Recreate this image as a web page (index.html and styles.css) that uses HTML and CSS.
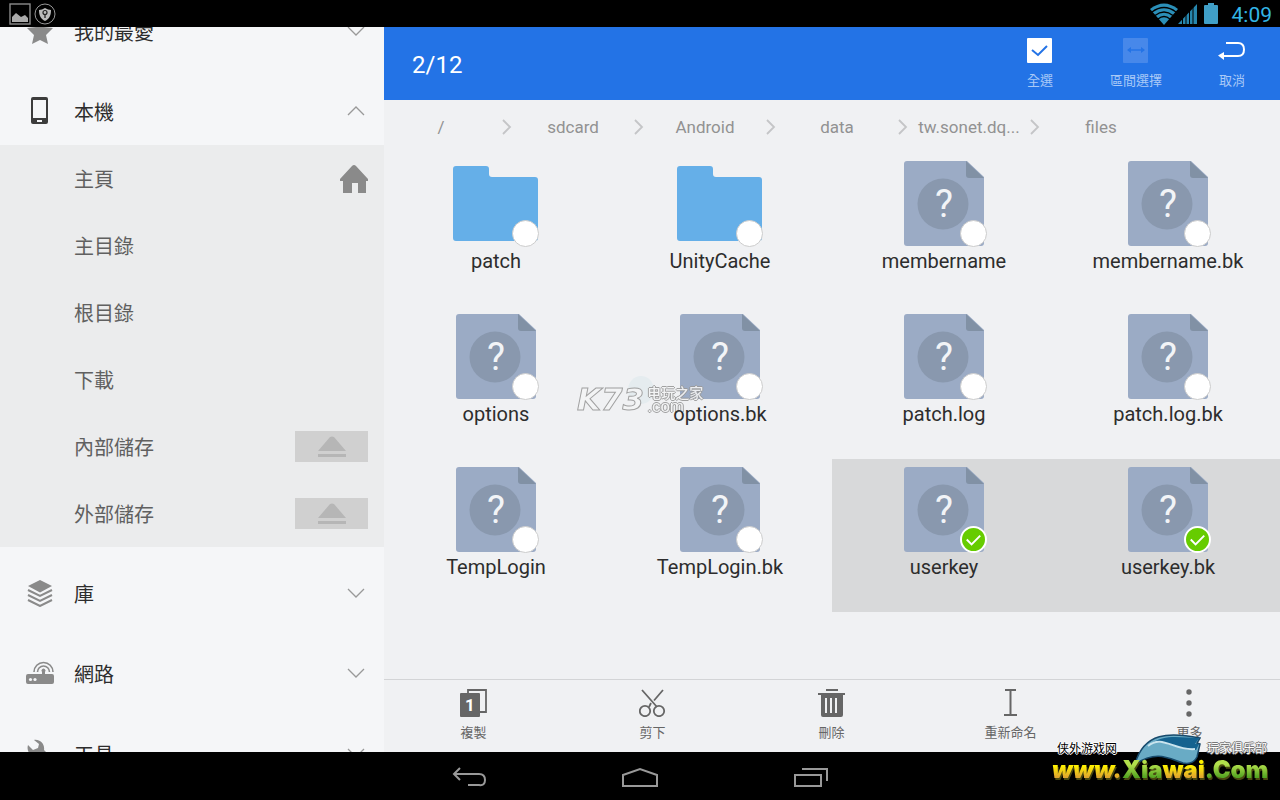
FILE: index.html
```html
<!DOCTYPE html>
<html lang="zh-Hant">
<head>
<meta charset="utf-8">
<title>檔案管理</title>
<link rel="stylesheet" href="styles.css">
</head>
<body>
<svg class="defs" aria-hidden="true">
  <symbol id="folder" viewBox="0 0 85 85"><path fill="#65afe8" d="M3 5h30q3 0 3 3v5q0 3 3 3h43q3 0 3 3v58q0 3-3 3H3q-3 0-3-3V8q0-3 3-3z"/></symbol>
  <symbol id="file" viewBox="0 0 85 85"><path fill="#9babc5" d="M6 0h60l17 16v66q0 3-3 3H6q-3 0-3-3V3q0-3 3-3z"/><path fill="#8191a5" d="M65 0l18 17H68q-3 0-3-3z"/><circle cx="42" cy="43" r="25.500" fill="#8998ae"/><text x="43" y="56" text-anchor="middle" class="mark">?</text></symbol>
  <symbol id="down" viewBox="0 0 18 10"><path d="M1 1l8 8 8-8" fill="none" stroke="#999" stroke-width="1.3"/></symbol>
  <symbol id="up" viewBox="0 0 18 10"><path d="M1 9l8-8 8 8" fill="none" stroke="#999" stroke-width="1.3"/></symbol>
  <symbol id="sep" viewBox="0 0 10 16"><path d="M1 1l7 7-7 7" fill="none" stroke="#c4c5c7" stroke-width="1.8"/></symbol>
  <symbol id="eject" viewBox="0 0 28 22"><path fill="#b6b6b6" d="M0 15L12 1q2-1 4 0l12 14zM0 18h28v3H0z"/></symbol>
</svg>

<header class="status">
  <div class="status-group">
    <svg width="22" height="22" viewBox="0 0 22 22"><rect x="1" y="1" width="20" height="20" fill="none" stroke="#8a8a8a" stroke-width="1.4"/><path fill="#aaa" d="M3 19v-5l4-4 5 4 4-2 3 3v4z"/></svg>
    <svg width="22" height="22" viewBox="0 0 22 22"><circle cx="11" cy="11" r="10" fill="none" stroke="#999"/><path fill="#bbb" d="M5 7q3 0 6-2 3 2 6 2c0 6-2 9-6 11-4-2-6-5-6-11z"/><circle cx="11" cy="9.500" r="2" fill="none" stroke="#222" stroke-width="1.200"/><path stroke="#222" stroke-width="1.300" d="M11 11v4"/></svg>
  </div>
  <div class="status-group">
    <svg width="28" height="22" viewBox="0 0 28 22"><path fill="#2b8fb8" d="M0 6Q14-5 28 6L14 22z"/><g fill="none" stroke="#000" stroke-width="1.300"><path d="M2 9q12-9 24 0M5 12.500q9-7 18 0M8 16q6-5 12 0"/></g></svg>
    <svg width="19" height="22" viewBox="0 0 19 22"><path fill="#2787ae" d="M0 21L19 1v20z"/><path stroke="#000" stroke-width="1" d="M4.500 0v22M8 0v22M11.500 0v22M15 0v22"/></svg>
    <svg class="battery" width="14" height="22" viewBox="0 0 14 22"><path fill="#409fc7" d="M4 0h6v2h3q1 0 1 1v17q0 1-1 1H1q-1 0-1-1V3q0-1 1-1h3z"/></svg>
    <time class="clock">4:09</time>
  </div>
</header>

<div class="app">
  <aside class="sidebar">
    <nav class="menu">
      <button class="group"><svg width="28" height="28" viewBox="0 0 28 28"><path fill="#8a8a8a" d="M14 1l4 9 9 1-7 7 2 9-8-4-8 4 2-9-7-7 9-1z"/></svg><span>我的最愛</span><svg class="arrow"><use href="#down"/></svg></button>
      <button class="group"><svg width="28" height="28" viewBox="0 0 28 28"><path fill="#3c3c3c" fill-rule="evenodd" d="M7 0h13q2 0 2 2v23q0 2-2 2H7q-2 0-2-2V2q0-2 2-2zm0 3v18h13V3zm4 20v2h5v-2z"/></svg><span>本機</span><svg class="arrow"><use href="#up"/></svg></button>
      <div class="subs">
        <a class="sub" href="#home"><span>主頁</span><svg width="28" height="28" viewBox="0 0 28 28"><path fill="#8a8a8a" d="M14 0q1 0 2 1l12 13v2h-2v12h-8V18h-6v10H3V16H0v-2L12 1q1-1 2-1z"/></svg></a>
        <a class="sub" href="#main">主目錄</a>
        <a class="sub" href="#root">根目錄</a>
        <a class="sub" href="#download">下載</a>
        <div class="sub"><a href="#internal">內部儲存</a><button class="eject" aria-label="退出內部儲存"><svg width="28" height="22"><use href="#eject"/></svg></button></div>
        <div class="sub"><a href="#external">外部儲存</a><button class="eject" aria-label="退出外部儲存"><svg width="28" height="22"><use href="#eject"/></svg></button></div>
      </div>
      <button class="group"><svg width="28" height="28" viewBox="0 0 28 28"><path fill="#8a8a8a" d="M14 1l12 6-12 6.500L2 7z"/><path fill="none" stroke="#8a8a8a" stroke-width="2" d="M2 11l12 6 12-6M2 16l12 6 12-6M2 21l12 6 12-6"/></svg><span>庫</span><svg class="arrow"><use href="#down"/></svg></button>
      <button class="group"><svg width="28" height="28" viewBox="0 0 28 28"><path fill="#8a8a8a" d="M2 15h14v-2a2 2 0 1 1 3 0v2h7q2 0 2 2v6q0 2-2 2H2q-2 0-2-2v-6q0-2 2-2z"/><g fill="#f5f6f8"><circle cx="4.500" cy="20.500" r="1.600"/><circle cx="9" cy="20.500" r="1.600"/></g><path fill="none" stroke="#8a8a8a" stroke-width="1.600" d="M8 13a9.500 9.500 0 0 1 19 0M11.500 13a6 6 0 0 1 12 0"/></svg><span>網路</span><svg class="arrow"><use href="#down"/></svg></button>
      <button class="group"><svg width="28" height="28" viewBox="0 0 28 28"><path fill="#8a8a8a" d="M8 1c6-1 11 4 10 10l9 9c2 3-3 8-6 6l-9-9C5 18 0 13 2 6l5 5 5-2 1-4z"/></svg><span>工具</span><svg class="arrow"><use href="#down"/></svg></button>
    </nav>
  </aside>

  <main class="content">
    <div class="bar">
      <h1 class="count">2/12</h1>
      <div class="actions">
        <button class="action"><svg width="28" height="28" viewBox="0 0 28 28"><rect x="1" y="1" width="25" height="25" rx="1" fill="#fff"/><path d="M6 13l6 5 9-9" fill="none" stroke="#2373e6" stroke-width="2"/></svg><span>全選</span></button>
        <button class="action" disabled><svg width="28" height="28" viewBox="0 0 28 28"><rect x="1" y="1" width="25" height="25" rx="1" fill="#4788ea"/><path d="M8 13h11" stroke="#2373e6" stroke-width="1.500"/><path fill="#2373e6" d="M5 13l4-3v6zM23 13l-4-3v6z"/></svg><span>區間選擇</span></button>
        <button class="action"><svg width="28" height="28" viewBox="0 0 28 28"><path d="M8 6h12q6 0 6 6.500T20 19H5" fill="none" stroke="#fff" stroke-width="2"/><path fill="#fff" d="M0 18.500L6 15v8z"/></svg><span>取消</span></button>
      </div>
    </div>
    <nav class="crumbs">
      <div class="crumb"><a href="#c0">/</a><svg><use href="#sep"/></svg></div>
      <div class="crumb"><a href="#c1">sdcard</a><svg><use href="#sep"/></svg></div>
      <div class="crumb"><a href="#c2">Android</a><svg><use href="#sep"/></svg></div>
      <div class="crumb"><a href="#c3">data</a><svg><use href="#sep"/></svg></div>
      <div class="crumb"><a href="#c4">tw.sonet.dq...</a><svg><use href="#sep"/></svg></div>
      <div class="crumb"><a href="#c5">files</a></div>
    </nav>
    <section class="files">
      <label class="item"><span class="thumb"><svg><use href="#folder"/></svg><input type="checkbox"></span><span class="name">patch</span></label>
      <label class="item"><span class="thumb"><svg><use href="#folder"/></svg><input type="checkbox"></span><span class="name">UnityCache</span></label>
      <label class="item"><span class="thumb"><svg><use href="#file"/></svg><input type="checkbox"></span><span class="name">membername</span></label>
      <label class="item"><span class="thumb"><svg><use href="#file"/></svg><input type="checkbox"></span><span class="name">membername.bk</span></label>
      <label class="item"><span class="thumb"><svg><use href="#file"/></svg><input type="checkbox"></span><span class="name">options</span></label>
      <label class="item"><span class="thumb"><svg><use href="#file"/></svg><input type="checkbox"></span><span class="name">options.bk</span></label>
      <label class="item"><span class="thumb"><svg><use href="#file"/></svg><input type="checkbox"></span><span class="name">patch.log</span></label>
      <label class="item"><span class="thumb"><svg><use href="#file"/></svg><input type="checkbox"></span><span class="name">patch.log.bk</span></label>
      <label class="item"><span class="thumb"><svg><use href="#file"/></svg><input type="checkbox"></span><span class="name">TempLogin</span></label>
      <label class="item"><span class="thumb"><svg><use href="#file"/></svg><input type="checkbox"></span><span class="name">TempLogin.bk</span></label>
      <label class="item"><span class="thumb"><svg><use href="#file"/></svg><input type="checkbox" checked><svg class="tick" viewBox="0 0 28 28"><path d="M7 14l5 5 9-9"/></svg></span><span class="name">userkey</span></label>
      <label class="item"><span class="thumb"><svg><use href="#file"/></svg><input type="checkbox" checked><svg class="tick" viewBox="0 0 28 28"><path d="M7 14l5 5 9-9"/></svg></span><span class="name">userkey.bk</span></label>
      <div class="k73"><i class="bubble"></i><b class="k73-name">K73</b><span class="k73-side"><span>电玩之家</span><span class="k73-com">.com</span></span></div>
    </section>
    <div class="tools">
      <button class="tool"><svg width="28" height="28" viewBox="0 0 28 28"><path d="M8 4V1h18v22h-6" fill="none" stroke="#666" stroke-width="1.800"/><rect y="4" width="20" height="24" rx="1" fill="#666"/><text x="10" y="22" text-anchor="middle" class="one">1</text></svg><span>複製</span></button>
      <button class="tool"><svg width="28" height="28" viewBox="0 0 28 28"><g fill="none" stroke="#666" stroke-width="1.800"><path d="M3 1l15 17M24 1l-9 10.500M12 14l-2 4"/><circle cx="6" cy="22" r="5.200"/><circle cx="20" cy="22" r="5.200"/></g></svg><span>剪下</span></button>
      <button class="tool"><svg width="28" height="28" viewBox="0 0 28 28"><path fill="#666" fill-rule="evenodd" d="M8 0h12v2H8zM0 4h27v2h-2v20q0 2-2 2H5q-2 0-2-2V6H0zm7 5v15h2V9zm5 0v15h2V9zm5 0v15h2V9z"/></svg><span>刪除</span></button>
      <button class="tool"><svg width="28" height="28" viewBox="0 0 28 28"><path fill="#666" d="M8 0h11v2h-4.500v23H20v2H7v-2h5.500V2H8z"/></svg><span>重新命名</span></button>
      <button class="tool"><svg width="28" height="28" viewBox="0 0 28 28"><g fill="#666"><circle cx="13" cy="3" r="2.700"/><circle cx="13" cy="14" r="2.700"/><circle cx="13" cy="25" r="2.700"/></g></svg><span>更多</span></button>
    </div>
  </main>
</div>

<footer class="system">
  <button aria-label="返回"><svg width="34" height="20" viewBox="0 0 34 20"><path d="M8 1L2 7l6 6M3 7h24q6 0 6 6t-6 5H16"/></svg></button>
  <button aria-label="主畫面"><svg width="38" height="20" viewBox="0 0 38 20"><path d="M2 8l17-6 17 6v11H2z"/></svg></button>
  <button aria-label="最近"><svg width="36" height="20" viewBox="0 0 36 20"><path d="M2 8h26v11H2zM9 2h25v12"/></svg></button>
  <div class="brand">
    <svg class="wave" viewBox="0 0 68 32"><path fill="#69abc5" stroke="#174a6c" stroke-width="1.500" d="M1 30C10-2 35-2 66 4l-3 5 3 1-3 13q-4 8-14 6C34 24 23 16 1 30z"/><path fill="#14628f" d="M15 11C31-1 47 4 65 4l-4 6h4l-3 6C44 17 28 3 15 11z"/><path fill="none" stroke="#c9e4ee" stroke-width="2" d="M14 12C28 0 40 17 61 15"/></svg>
    <div class="brand-top"><span>侠外游戏网</span><span class="club">玩家俱乐部</span></div>
    <div class="brand-url"><span class="slant">www.</span><span class="lime">Xia</span><span>wai</span><span class="lime">.Com</span></div>
  </div>
</footer>
</body>
</html>
```
FILE: styles.css
```css
* { box-sizing: border-box; }
body {
  margin: 0;
  height: 100vh;
  display: flex;
  flex-direction: column;
  overflow: hidden;
  background: #000;
  color: #2d2d2d;
  font-family: Roboto, "Noto Sans CJK TC", sans-serif;
}
button { border: 0; padding: 0; margin: 0; background: none; font: inherit; color: inherit; }
a { color: inherit; text-decoration: none; }
svg { display: block; flex: none; }
.defs { width: 0; height: 0; position: absolute; }
.mark { font: 400 38px Roboto, sans-serif; fill: #f2f4f7; }
.one { font: 700 17px Roboto, sans-serif; fill: #fff; }

.status { flex: none; height: 27px; display: flex; justify-content: space-between; align-items: center; padding: 0 8px 0 9px; }
.status-group { display: flex; align-items: center; gap: 3px; }
.status-group + .status-group { gap: 0; }
.battery { margin: 0 14px 0 7px; }
.clock { color: #33b5e5; font-size: 21px; line-height: 27px; padding-top: 4px; }

.app { flex: 1; min-height: 0; display: flex; }
.sidebar { width: 30%; flex: none; overflow: hidden; background: #f5f6f8; }
.menu { margin-top: -42px; }
.group { width: 100%; height: 80px; display: flex; align-items: center; gap: 20px; padding: 12px 19px 0 26px; font-size: 20px; text-align: left; }
.group span { flex: 1; }
.arrow { width: 18px; height: 10px; }
.subs { background: #ebeced; color: #606060; font-size: 20px; }
.sub { height: 67px; display: flex; align-items: center; justify-content: space-between; padding: 0 16px 0 74px; }
.eject { width: 73px; height: 31px; background: #d0d0d0; display: flex; align-items: center; justify-content: center; }

.content { flex: 1; min-width: 0; display: flex; flex-direction: column; background: #f0f1f3; }
.bar { flex: none; height: 73px; background: #2373e6; color: #fff; display: flex; align-items: center; justify-content: space-between; padding-left: 28px; }
.count { margin: 0; font-size: 24px; line-height: 30px; font-weight: 400; padding-top: 2px; }
.actions { display: flex; }
.action { width: 96px; display: flex; flex-direction: column; align-items: center; gap: 6px; font-size: 13px; line-height: 20px; color: #a9c9f7; }
.crumbs { flex: none; height: 53px; display: flex; align-items: center; color: #929292; font-size: 17px; }
.crumb { width: 132px; display: flex; align-items: center; gap: 4px; }
.crumb a { width: 114px; text-align: center; }
.crumb svg { width: 10px; height: 16px; }

.files { flex: 1; position: relative; display: grid; grid-template-columns: repeat(4, 1fr); grid-auto-rows: 153px; }
.item { display: flex; flex-direction: column; align-items: center; padding-top: 8px; gap: 3px; font-size: 20px; line-height: 24px; }
.item:has(:checked) { background: #d8d9da; }
.name { position: relative; z-index: 1; }
.thumb { position: relative; width: 86px; height: 85px; }
.thumb > svg { width: 85px; height: 85px; }
.thumb input { appearance: none; position: absolute; right: 0; bottom: -1px; width: 27px; height: 27px; margin: 0; border: 1px solid #ccc; border-radius: 50%; background: #fff; }
.thumb input:checked { background: #6c0; border: 2px solid #fff; }
.thumb > .tick { position: absolute; right: 0; bottom: -1px; width: 27px; height: 27px; fill: none; stroke: #fff; stroke-width: 2; pointer-events: none; }

.tools { flex: none; height: 73px; border-top: 1px solid #d3d4d6; display: grid; grid-template-columns: repeat(5, 1fr); padding-right: 1px; }
.tool { display: flex; flex-direction: column; align-items: center; padding-top: 9px; gap: 6px; font-size: 13px; line-height: 20px; color: #666; }

.k73 { position: absolute; left: 193px; top: 228px; display: flex; align-items: center; gap: 3px; color: #f4f5f6; opacity: 0.9; pointer-events: none; font-family: "DejaVu Sans", "Noto Sans CJK SC", sans-serif; }
.bubble { position: absolute; left: 51px; top: -5px; width: 26px; height: 28px; border-radius: 50%; background: #e4ecef; }
.k73-name { position: relative; font-size: 31px; line-height: 36px; font-style: italic; -webkit-text-stroke: 1px #999; }
.k73-side { position: relative; display: flex; flex-direction: column; font-size: 14px; line-height: 14px; font-weight: 500; text-shadow: 1px 0 #999, -1px 0 #999, 0 1px #999, 0 -1px #999; }
.k73-com { font-family: "Liberation Sans", sans-serif; font-size: 17px; line-height: 13px; }

.system { flex: none; height: 48px; position: relative; display: flex; justify-content: center; }
.system button { width: 171px; display: flex; align-items: center; justify-content: center; padding-top: 2px; }
.system button svg { fill: none; stroke: #999; stroke-width: 2; }
.brand { position: absolute; right: 12px; bottom: 16px; width: 216px; }
.wave { position: absolute; left: 82px; top: -6px; width: 68px; height: 32px; }
.brand-top { display: flex; justify-content: space-between; padding: 0 1px 0 5px; font: 12px/16px "Noto Sans CJK SC", sans-serif; color: #000; text-shadow: 1px 0 #fff, -1px 0 #fff, 0 1px #fff, 0 -1px #fff; }
.club { color: #fff; text-shadow: 1px 0 #777, -1px 0 #777, 0 1px #777, 0 -1px #777; }
.brand-url { position: relative; display: flex; justify-content: center; font: 900 24px/28px Inter, sans-serif; filter: drop-shadow(1px 2px 0 #4a4a10); }
.brand-url span { color: transparent; background: linear-gradient(#fff200 35%, #e0a52e 75%); background-clip: text; -webkit-background-clip: text; }
.brand-url .slant { font-style: italic; }
.brand-url .lime { background-image: linear-gradient(#b3e04c 30%, #55a522 75%); }
```
